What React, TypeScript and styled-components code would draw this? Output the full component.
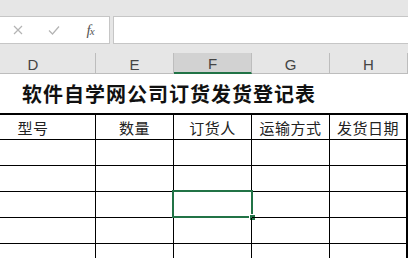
import React from 'react'
import styled, { createGlobalStyle } from 'styled-components'

const GlobalStyle = createGlobalStyle`
  html, body {
    margin: 0;
    padding: 0;
    background: #ffffff;
    overflow: hidden;
  }
  body {
    font-family: "Noto Sans CJK SC", "Liberation Sans", sans-serif;
  }
`

const COLS = '125px 78px 78px 78px 78px'
const GREEN = '#217346'

const Window = styled.div`
  width: 408px;
  height: 258px;
  overflow: hidden;
  background: #ffffff;
`

const Ribbon = styled.div`
  height: 16px;
  background: #e6e6e6;
`

const FormulaBar = styled.div`
  display: flex;
  gap: 3px;
  height: 28px;
  background: #e6e6e6;
`

const FieldBox = styled.div<{ $grow?: boolean }>`
  box-sizing: border-box;
  height: 28px;
  background: #ffffff;
  border: 1px solid #c6c6c6;
  border-left: ${(p) => (p.$grow ? '1px solid #c6c6c6' : 'none')};
  border-right: ${(p) => (p.$grow ? 'none' : '1px solid #c6c6c6')};
  ${(p) => (p.$grow ? 'flex: 1;' : 'width: 110px;')}
  display: flex;
  align-items: center;
`

const IconSlot = styled.div`
  width: 36px;
  height: 100%;
  display: flex;
  align-items: center;
  justify-content: center;
  color: #b4b4b4;
`

const Fx = styled.span`
  font-family: "Liberation Serif", "DejaVu Serif", serif;
  font-style: italic;
  font-size: 15px;
  color: #555555;
  letter-spacing: -1px;

  small {
    font-size: 11px;
  }
`

const Spacer = styled.div`
  height: 9px;
  background: #e6e6e6;
`

const HeaderRow = styled.div`
  display: grid;
  grid-template-columns: ${COLS};
  margin-left: -29px;
  height: 20px;
  background: #e6e6e6;
`

const ColHead = styled.div<{ $active?: boolean }>`
  box-sizing: border-box;
  display: flex;
  align-items: center;
  justify-content: center;
  font-family: "Liberation Sans", Arial, sans-serif;
  font-size: 15px;
  color: #444444;
  background: ${(p) => (p.$active ? '#d2d2d2' : '#e6e6e6')};
  border-right: 1px solid #bdbdbd;
  border-bottom: ${(p) => (p.$active ? `2px solid ${GREEN}` : '1px solid #bdbdbd')};
  padding-top: 2px;
`

const TitleRow = styled.div`
  height: 40px;
  display: flex;
  align-items: center;
  padding-left: 22px;
  font-size: 20px;
  font-weight: 700;
  color: #111111;
  letter-spacing: 1px;
`

const Sheet = styled.div`
  display: grid;
  grid-template-columns: ${COLS};
  grid-auto-rows: auto;
  margin-left: -29px;
`

const Cell = styled.div<{ $head?: boolean; $last?: boolean }>`
  position: relative;
  box-sizing: border-box;
  height: ${(p) => (p.$head ? '27px' : '26px')};
  border-top: ${(p) => (p.$head ? '2px solid #000' : 'none')};
  border-bottom: 1px solid #000;
  border-right: ${(p) => (p.$last ? '2px solid #000' : '1px solid #000')};
  display: flex;
  align-items: center;
  justify-content: center;
  font-size: 15px;
  color: #222222;
  letter-spacing: 0.5px;
`

const Selection = styled.div`
  position: absolute;
  top: -2px;
  left: -2px;
  width: 81px;
  height: 28px;
  box-sizing: border-box;
  border: 2px solid ${GREEN};
  pointer-events: none;
`

const FillHandle = styled.div`
  position: absolute;
  right: -4px;
  bottom: -4px;
  width: 5px;
  height: 5px;
  background: ${GREEN};
  outline: 1px solid #ffffff;
`

const columns = ['D', 'E', 'F', 'G', 'H']
const headings = ['型号', '数量', '订货人', '运输方式', '发货日期']
const bodyRows = 5
const selected = { row: 2, col: 2 }

const CrossIcon = () => (
  <svg width="10" height="10" viewBox="0 0 10 10">
    <path d="M1 1 L9 9 M9 1 L1 9" stroke="currentColor" strokeWidth="1.2" />
  </svg>
)

const CheckIcon = () => (
  <svg width="12" height="10" viewBox="0 0 12 10">
    <path d="M1 5.5 L4.5 9 L11 1.5" stroke="currentColor" strokeWidth="1.2" fill="none" />
  </svg>
)

const App = () => {
  return (
    <Window>
      <GlobalStyle />
      <Ribbon />
      <FormulaBar>
        <FieldBox>
          <IconSlot>
            <CrossIcon />
          </IconSlot>
          <IconSlot>
            <CheckIcon />
          </IconSlot>
          <IconSlot>
            <Fx>
              f<small>x</small>
            </Fx>
          </IconSlot>
        </FieldBox>
        <FieldBox $grow />
      </FormulaBar>
      <Spacer />
      <HeaderRow>
        {columns.map((c, i) => (
          <ColHead key={c} $active={i === selected.col}>
            {c}
          </ColHead>
        ))}
      </HeaderRow>
      <TitleRow>软件自学网公司订货发货登记表</TitleRow>
      <Sheet>
        {headings.map((h, i) => (
          <Cell key={h} $head $last={i === headings.length - 1}>
            {h}
          </Cell>
        ))}
        {Array.from({ length: bodyRows }).map((_, r) =>
          headings.map((h, c) => (
            <Cell key={`${r}-${h}`} $last={c === headings.length - 1}>
              {r === selected.row && c === selected.col && (
                <Selection>
                  <FillHandle />
                </Selection>
              )}
            </Cell>
          ))
        )}
      </Sheet>
    </Window>
  )
}

export default App
